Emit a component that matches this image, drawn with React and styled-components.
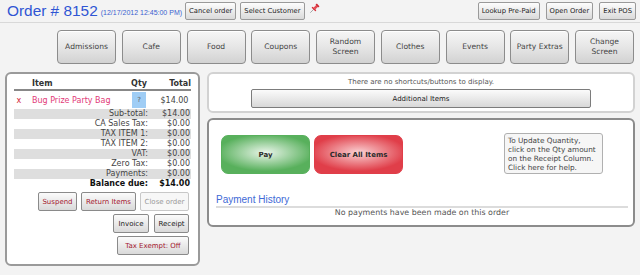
import React from 'react';
import styled, { createGlobalStyle } from 'styled-components';

const Global = createGlobalStyle`
  html, body { margin: 0; padding: 0; background: #f3f3f3; }
  body {
    font-family: "DejaVu Sans", Verdana, sans-serif;
    font-size: 8px;
    color: #333;
    width: 640px;
    height: 275px;
    overflow: hidden;
  }
  * { box-sizing: border-box; }
  button { font-family: "DejaVu Sans", Verdana, sans-serif; cursor: pointer; }
`;

const Header = styled.header`
  display: flex;
  align-items: center;
  height: 23px;
  padding: 0 4px 1px 7px;
  border-bottom: 1px solid #d8d8d8;
`;

const Title = styled.h1`
  margin: 0;
  font-family: "Liberation Sans", Arial, sans-serif;
  font-weight: normal;
  font-size: 15.4px;
  line-height: 1;
  color: #2f55d4;
`;

const DateText = styled.span`
  font-family: "Liberation Sans", Arial, sans-serif;
  font-size: 7px;
  color: #3a5fd0;
  margin: 3px 0 0 3px;
`;

const TopButton = styled.button`
  height: 18px;
  padding: 0 3px;
  margin-left: ${p => p.$ml ?? 4}px;
  font-size: 6.8px;
  color: #222;
  border: 1px solid #9a9a9a;
  border-radius: 2px;
  background: linear-gradient(#fdfdfd, #dadada);
  white-space: nowrap;
`;

const Spacer = styled.div`
  flex: 1;
`;

const Pin = styled.svg`
  margin: -4px 0 0 4px;
  flex: none;
`;

const CategoryBar = styled.nav`
  display: flex;
  justify-content: flex-end;
  gap: 5.75px;
  padding: 0 6px 0 0;
  margin-top: 7px;
`;

const CategoryButton = styled.button`
  width: 59px;
  height: 34px;
  padding: 0 2px;
  font-size: 7.6px;
  line-height: 10px;
  color: #444;
  border: 1px solid #8c8c8c;
  border-radius: 4px;
  background: linear-gradient(#f6f6f6, #e6e6e6 50%, #d2d2d2);
  box-shadow: inset 0 1px 0 #fff;
`;

const Main = styled.main`
  display: flex;
  align-items: flex-start;
  gap: 7px;
  padding: 0 5px;
  margin-top: 8px;
`;

const ReceiptPanel = styled.section`
  width: 195px;
  height: 194px;
  padding: 5px 7px 0;
  background: #fff;
  border: 2px solid #9a9a9a;
  border-radius: 6px;
`;

const ItemGrid = styled.div`
  display: grid;
  grid-template-columns: 18px 1fr 16px 44px;
  align-items: ${p => (p.$head ? 'end' : 'center')};
  height: ${p => (p.$head ? 12 : 18)}px;
  font-weight: ${p => (p.$head ? 'bold' : 'normal')};
  color: ${p => (p.$head ? '#333' : '#444')};
  border-bottom: ${p => (p.$head ? '2px solid #888' : 'none')};
  padding-bottom: ${p => (p.$head ? 1 : 0)}px;
`;

const Cell = styled.span`
  text-align: ${p => p.$align || 'left'};
  color: ${p => p.$color || 'inherit'};
  white-space: nowrap;
`;

const QtyBox = styled.span`
  display: flex;
  align-items: center;
  justify-content: center;
  width: 14px;
  height: 16px;
  margin-left: 1px;
  background: #9fcdf5;
  color: #555;
  font-size: 7px;
`;

const SumRow = styled.div`
  display: grid;
  grid-template-columns: 1fr 43px;
  height: 10px;
  line-height: 10px;
  background: ${p => (p.$shade ? '#dedede' : 'transparent')};
  font-weight: ${p => (p.$bold ? 'bold' : 'normal')};
  color: ${p => (p.$bold ? '#111' : '#444')};
  & > span { text-align: right; white-space: nowrap; }
  & > span:last-child { padding-right: 1px; }
`;

const ButtonStack = styled.div`
  display: flex;
  flex-direction: column;
  gap: 3px;
  margin-top: 3px;
  padding-right: 2px;
`;

const ButtonRow = styled.div`
  display: flex;
  justify-content: flex-end;
  gap: ${p => p.$gap ?? 4}px;
`;

const tones = {
  red: { color: '#a3172e', bg: 'linear-gradient(#fbfbfb, #d9d9d9)', border: '#8a8a8a' },
  dark: { color: '#222', bg: 'linear-gradient(#fbfbfb, #d9d9d9)', border: '#8a8a8a' },
  dim: { color: '#9a9a9a', bg: '#f7f7f7', border: '#c8c8c8' },
};

const SmallButton = styled.button`
  width: ${p => p.$w}px;
  height: 19px;
  padding: 0;
  font-size: 7px;
  white-space: nowrap;
  color: ${p => tones[p.$tone].color};
  background: ${p => tones[p.$tone].bg};
  border: 1px solid ${p => tones[p.$tone].border};
  border-radius: 2px;
`;

const RightColumn = styled.div`
  display: flex;
  flex-direction: column;
  gap: 5px;
  width: 428px;
`;

const ShortcutPanel = styled.section`
  display: flex;
  flex-direction: column;
  align-items: center;
  height: 41px;
  padding-top: 3px;
  background: #fff;
  border: 2px solid #d2d2d2;
  border-radius: 6px;
`;

const Notice = styled.div`
  font-size: 7px;
  line-height: 10px;
  color: #555;
`;

const WideButton = styled.button`
  width: 340px;
  height: 19px;
  margin-top: 2px;
  font-size: 7px;
  color: #222;
  border: 1px solid #7c7c7c;
  border-radius: 2px;
  background: linear-gradient(#fbfbfb, #d8d8d8);
`;

const PayPanel = styled.section`
  height: 109px;
  padding: 15px 5px 0 7px;
  background: #fff;
  border: 2px solid #8c8c8c;
  border-radius: 6px;
`;

const ActionRow = styled.div`
  display: flex;
  align-items: flex-start;
  padding-left: 5px;
`;

const looks = {
  green: { edge: '#58b05c', mid: '#eaf5ea' },
  red: { edge: '#e03e49', mid: '#fad2d4' },
};

const BigButton = styled.button`
  width: 89px;
  height: 39px;
  margin-right: 4px;
  font-size: 7px;
  font-weight: bold;
  color: #2a2a2a;
  border: 1px solid ${p => looks[p.$look].edge};
  border-radius: 7px;
  background: radial-gradient(ellipse 55% 50% at 50% 45%, ${p => looks[p.$look].mid}, ${p => looks[p.$look].edge});
`;

const HelpBox = styled.div`
  width: 99px;
  height: 41px;
  margin: -2px 0 0 97px;
  padding: 2px 3px;
  font-size: 7.3px;
  line-height: 9px;
  color: #444;
  background: #f6f6f6;
  border: 1px solid #b0b0b0;
  border-radius: 3px;
  white-space: nowrap;
  overflow: hidden;
`;

const HistoryTitle = styled.h2`
  margin: 20px 0 0;
  font-family: "Liberation Sans", Arial, sans-serif;
  font-weight: normal;
  font-size: 10px;
  line-height: 12px;
  color: #4169d6;
  border-bottom: 2px solid #dcdcdc;
`;

const EmptyText = styled.div`
  text-align: center;
  font-size: 7.9px;
  line-height: 10px;
  color: #555;
`;

const categories = [
  'Admissions', 'Cafe', 'Food', 'Coupons', ['Random', 'Screen'], 'Clothes', 'Events', 'Party Extras', ['Change', 'Screen'],
];

const summary = [
  ['Sub-total:', '$14.00'],
  ['CA Sales Tax:', '$0.00'],
  ['TAX ITEM 1:', '$0.00'],
  ['TAX ITEM 2:', '$0.00'],
  ['VAT:', '$0.00'],
  ['Zero Tax:', '$0.00'],
  ['Payments:', '$0.00'],
];

export default function App() {
  return (
    <>
      <Global />
      <Header>
        <Title>Order # 8152</Title>
        <DateText>(12/17/2012 12:45:00 PM)</DateText>
        <TopButton $ml={3}>Cancel order</TopButton>
        <TopButton>Select Customer</TopButton>
        <Pin width="11" height="11" viewBox="0 0 12 12">
          <g transform="rotate(45 6 6)">
            <line x1="6" y1="7" x2="6" y2="12.5" stroke="#9a9a9a" strokeWidth="0.9" />
            <rect x="3" y="6" width="6" height="1.6" rx="0.6" fill="#d8323c" />
            <rect x="4.6" y="2" width="2.8" height="4.2" fill="#e64a52" />
            <rect x="3.8" y="0.4" width="4.4" height="1.9" rx="0.6" fill="#cf2a35" />
          </g>
        </Pin>
        <Spacer />
        <TopButton>Lookup Pre-Paid</TopButton>
        <TopButton $ml={6}>Open Order</TopButton>
        <TopButton $ml={6}>Exit POS</TopButton>
      </Header>

      <CategoryBar>
        {categories.map((c, i) => (
          <CategoryButton key={i}>
            {Array.isArray(c) ? (<>{c[0]}<br />{c[1]}</>) : c}
          </CategoryButton>
        ))}
      </CategoryBar>

      <Main>
        <ReceiptPanel>
          <ItemGrid $head>
            <Cell />
            <Cell>Item</Cell>
            <Cell $align="center">Qty</Cell>
            <Cell $align="right">Total</Cell>
          </ItemGrid>
          <ItemGrid>
            <Cell $color="#d3243a">&nbsp;x</Cell>
            <Cell $color="#e23a78">Bug Prize Party Bag</Cell>
            <QtyBox>?</QtyBox>
            <Cell $align="right">$14.00&nbsp;</Cell>
          </ItemGrid>
          {summary.map(([l, v], i) => (
            <SumRow key={l} $shade={i % 2 === 0}>
              <span>{l}</span>
              <span>{v}</span>
            </SumRow>
          ))}
          <SumRow $bold>
            <span>Balance due:</span>
            <span>$14.00</span>
          </SumRow>
          <ButtonStack>
            <ButtonRow>
              <SmallButton $tone="red" $w={39}>Suspend</SmallButton>
              <SmallButton $tone="red" $w={55}>Return Items</SmallButton>
              <SmallButton $tone="dim" $w={49}>Close order</SmallButton>
            </ButtonRow>
            <ButtonRow $gap={5}>
              <SmallButton $tone="dark" $w={36}>Invoice</SmallButton>
              <SmallButton $tone="dark" $w={35}>Receipt</SmallButton>
            </ButtonRow>
            <ButtonRow>
              <SmallButton $tone="red" $w={72}>Tax Exempt: Off</SmallButton>
            </ButtonRow>
          </ButtonStack>
        </ReceiptPanel>

        <RightColumn>
          <ShortcutPanel>
            <Notice>There are no shortcuts/buttons to display.</Notice>
            <WideButton>Additional Items</WideButton>
          </ShortcutPanel>
          <PayPanel>
            <ActionRow>
              <BigButton $look="green">Pay</BigButton>
              <BigButton $look="red">Clear All Items</BigButton>
              <HelpBox>
                To Update Quantity,<br />
                click on the Qty amount<br />
                on the Receipt Column.<br />
                Click here for help.
              </HelpBox>
            </ActionRow>
            <HistoryTitle>Payment History</HistoryTitle>
            <EmptyText>No payments have been made on this order</EmptyText>
          </PayPanel>
        </RightColumn>
      </Main>
    </>
  );
}
